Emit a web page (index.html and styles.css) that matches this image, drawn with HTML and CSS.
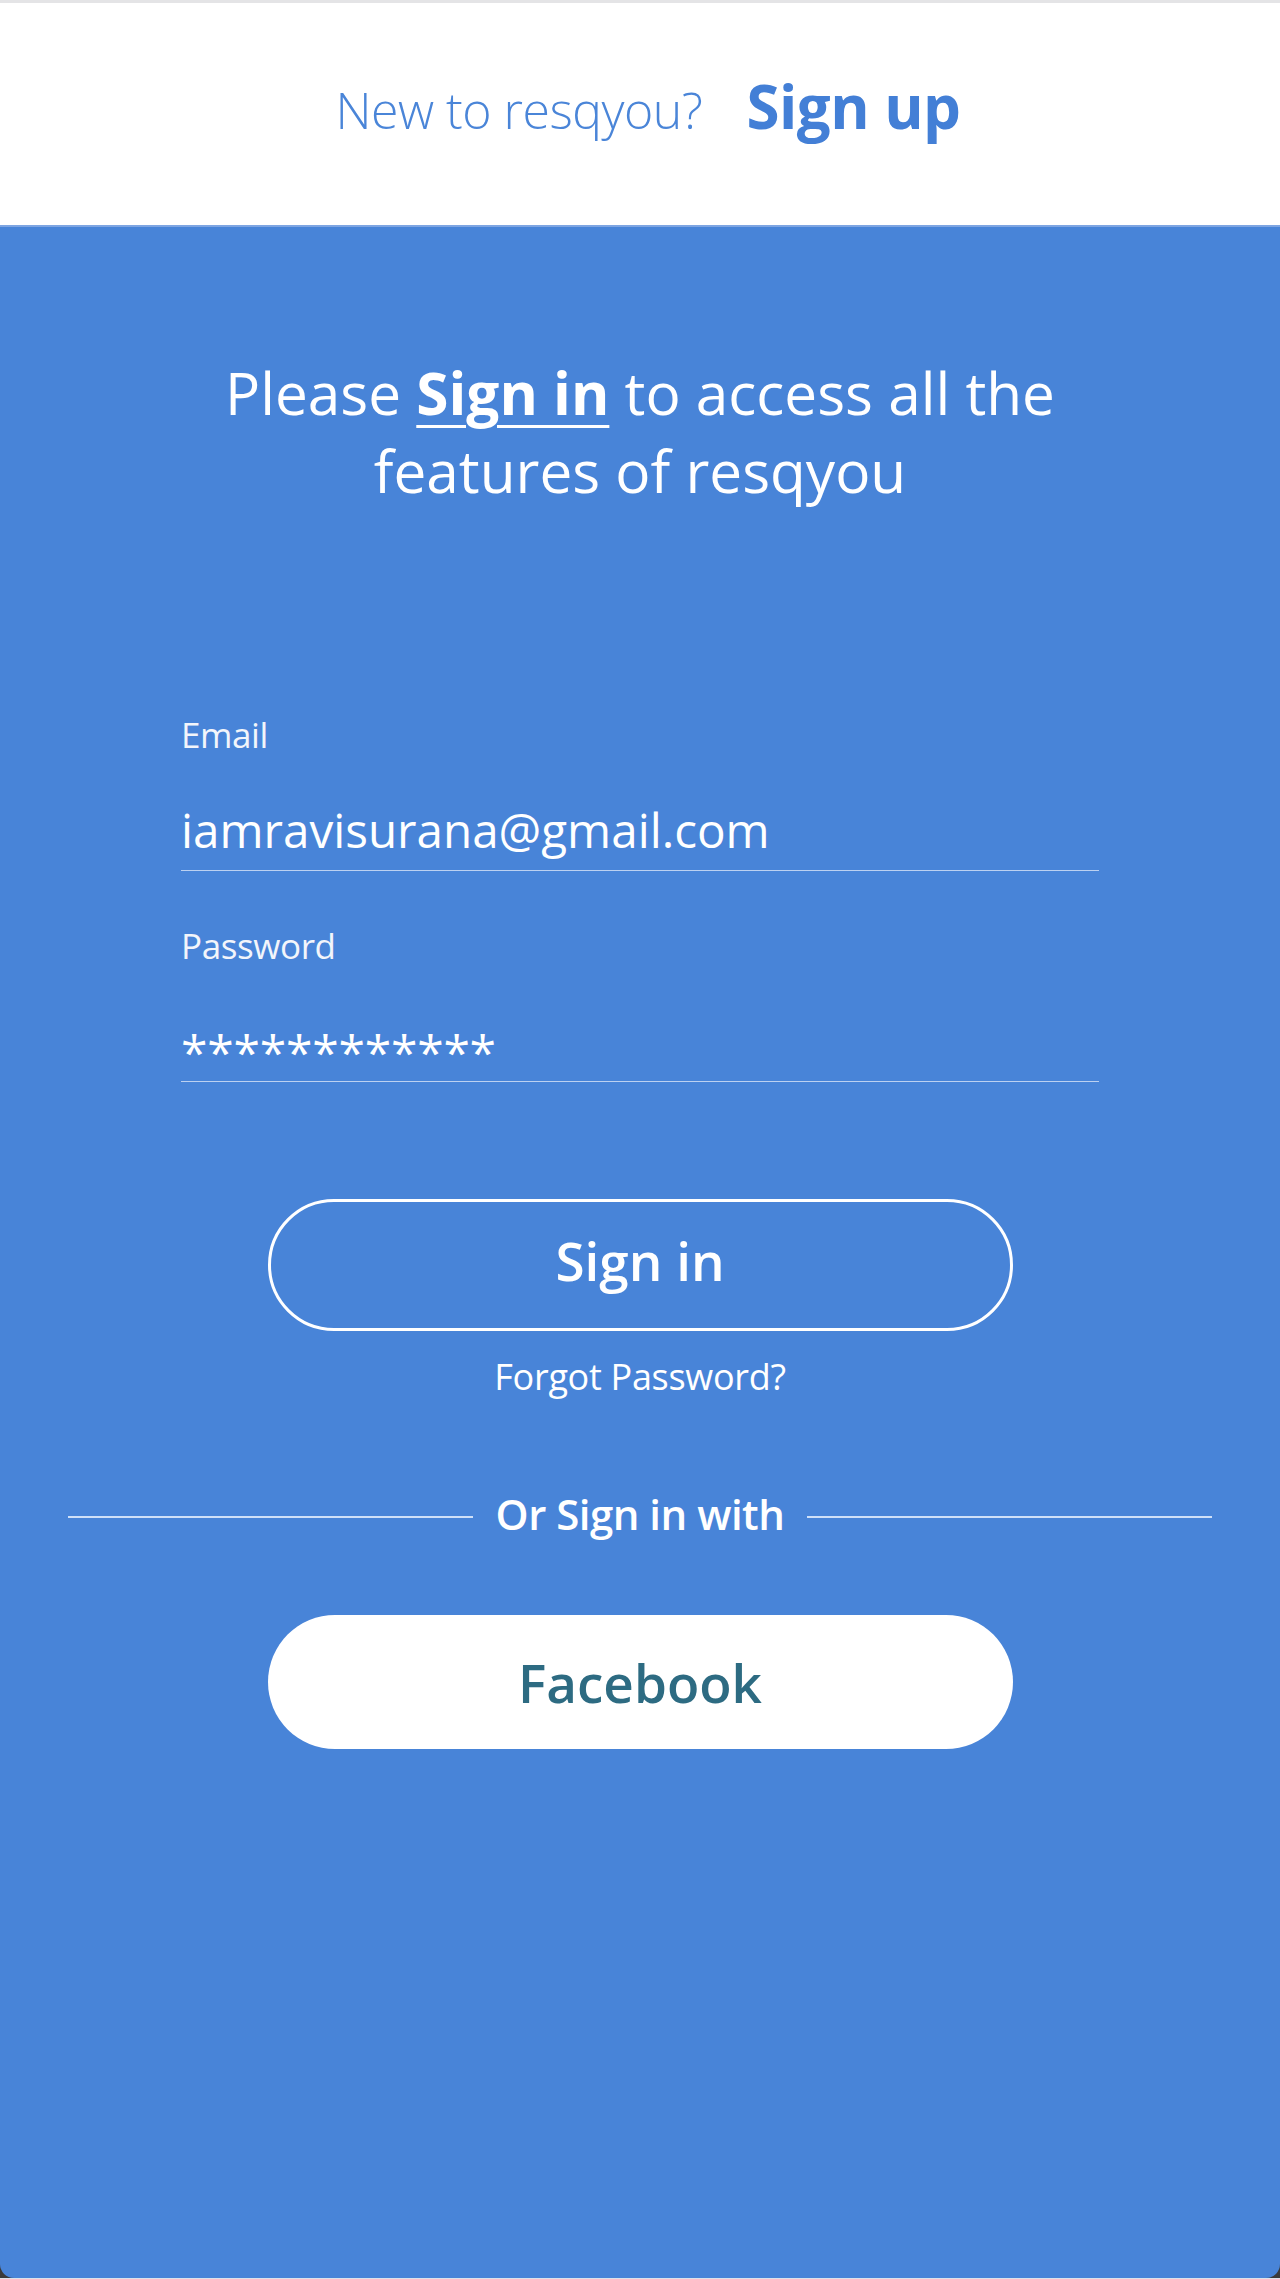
FILE: index.html
```html
<!DOCTYPE html>
<html lang="en">
<head>
<meta charset="utf-8">
<title>resqyou – Sign in</title>
<link rel="stylesheet" href="styles.css">
</head>
<body>
<div class="page">
  <header class="topbar">
    <span class="topbar-question">New to resqyou?</span>
    <a class="topbar-signup" href="#">Sign up</a>
  </header>
  <main class="panel">
    <h1 class="title">Please <a class="title-link" href="#">Sign in</a> to access all the features of resqyou</h1>

    <form class="form">
      <div class="field">
        <label class="field-label">Email</label>
        <div class="field-value">iamravisurana@gmail.com</div>
      </div>
      <div class="field field--password">
        <label class="field-label">Password</label>
        <div class="field-value field-value--password">************</div>
      </div>
    </form>

    <div class="actions">
      <button class="btn btn--outline" type="button">Sign in</button>
      <a class="forgot" href="#">Forgot Password?</a>
    </div>

    <div class="divider">
      <span class="divider-line"></span>
      <span class="divider-text">Or Sign in with</span>
      <span class="divider-line"></span>
    </div>

    <div class="social">
      <button class="btn btn--white" type="button">Facebook</button>
    </div>
  </main>
</div>
</body>
</html>
```

FILE: styles.css
```css
* { box-sizing: border-box; }

html, body {
  margin: 0;
  padding: 0;
}

body {
  font-family: "Open Sans", "Liberation Sans", sans-serif;
  background: #ffffff;
}

.page {
  height: 2279px;
  background: #3a3a3a;
  border-bottom: 1px solid #dde3ea;
  display: flex;
  flex-direction: column;
}

.topbar {
  height: 225px;
  flex: none;
  background: #ffffff;
  border-top: 3px solid #e4e4e6;
  display: flex;
  justify-content: center;
  align-items: baseline;
  gap: 44px;
  padding-top: 62px;
  padding-left: 16px;
}

.topbar-question {
  font-size: 50px;
  font-weight: 300;
  color: #4a85d8;
  letter-spacing: -0.5px;
}

.topbar-signup {
  font-size: 60px;
  font-weight: 700;
  color: #437fd6;
  text-decoration: none;
  letter-spacing: -0.5px;
}

.panel {
  flex: 1;
  background: #4884d8;
  border-top: 2px solid #7ea5e2;
  border-radius: 0 0 14px 14px;
  padding-top: 126px;
  display: flex;
  flex-direction: column;
  align-items: center;
}

.title {
  margin: 0;
  width: 900px;
  text-align: center;
  color: #ffffff;
  font-size: 58.5px;
  line-height: 78px;
  font-weight: 400;
}

.title-link {
  color: #ffffff;
  font-weight: 700;
  text-decoration: underline;
  text-decoration-thickness: 3px;
  text-underline-offset: 10px;
}

.form {
  width: 918px;
  margin-top: 203px;
  display: flex;
  flex-direction: column;
  gap: 52px;
}

.field {
  display: flex;
  flex-direction: column;
}

.field-label {
  color: #f2f5fb;
  font-size: 35px;
  line-height: 46px;
  letter-spacing: -0.4px;
}

.field-value {
  margin-top: 31px;
  color: #ffffff;
  font-size: 47.6px;
  line-height: 81px;
  border-bottom: 1.5px solid #bcd1f1;
  white-space: nowrap;
}

.field-value--password {
  margin-top: 53px;
  line-height: 59px;
  font-size: 48px;
  letter-spacing: -0.2px;
}

.actions {
  margin-top: 117px;
  display: flex;
  flex-direction: column;
  align-items: center;
  gap: 25px;
}

.btn {
  width: 745px;
  border-radius: 999px;
  font-family: "Open Sans", "Liberation Sans", sans-serif;
  font-weight: 600;
  font-size: 53px;
  cursor: pointer;
  display: flex;
  align-items: center;
  justify-content: center;
}

.btn--outline {
  height: 132px;
  background: transparent;
  border: 3px solid #ffffff;
  color: #ffffff;
  padding-bottom: 10px;
}

.btn--white {
  height: 134px;
  background: #ffffff;
  border: none;
  color: #2d6b82;
}

.forgot {
  color: #ffffff;
  font-size: 36px;
  line-height: 42px;
  text-decoration: none;
  letter-spacing: -0.3px;
}

.divider {
  width: 1144px;
  margin-top: 90px;
  display: flex;
  align-items: center;
  gap: 23px;
}

.divider-line {
  flex: 1;
  height: 2px;
  margin-top: 6px;
  background: #cfe0f8;
}

.divider-text {
  color: #ffffff;
  font-weight: 600;
  font-size: 42px;
  line-height: 52px;
  letter-spacing: -0.5px;
}

.social {
  margin-top: 75px;
  display: flex;
  justify-content: center;
}
```
